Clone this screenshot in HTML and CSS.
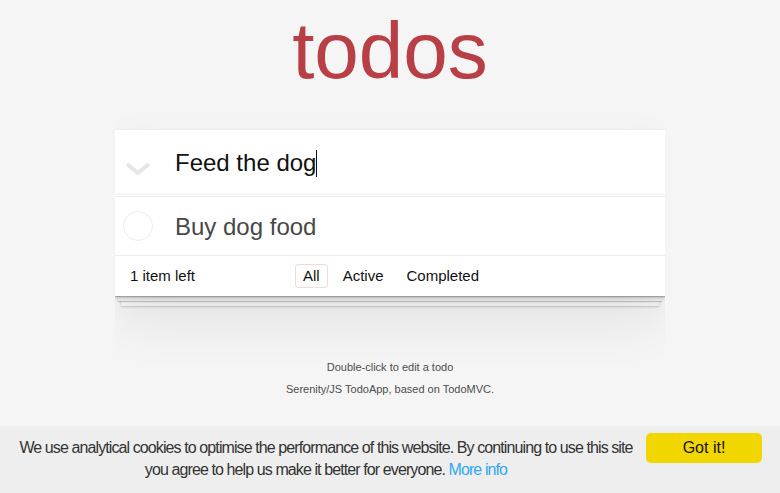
FILE: index.html
```html
<!DOCTYPE html>
<html lang="en">
<head>
  <meta charset="UTF-8">
  <title>Serenity/JS TodoApp</title>
  <link rel="stylesheet" href="styles.css">
</head>
<body>

  <section class="todoapp">
    <h1>todos</h1>

    <!-- New todo -->
    <header class="header">
      <div class="toggle-all">
        <svg width="26" height="14" viewBox="0 0 26 14">
          <polyline points="2,2 13,11 24,2" fill="none" stroke="#e6e6e6" stroke-width="4"/>
        </svg>
      </div>
      <div class="new-todo">Feed the dog<span class="caret"></span></div>
    </header>

    <!-- Todo list -->
    <ul class="todo-list">
      <li>
        <span class="toggle"></span>
        <label>Buy dog food</label>
      </li>
    </ul>

    <!-- Footer -->
    <footer class="footer">
      <span class="todo-count"><strong>1</strong> item left</span>
      <ul class="filters">
        <li><a class="selected" href="#/">All</a></li>
        <li><a href="#/active">Active</a></li>
        <li><a href="#/completed">Completed</a></li>
      </ul>
    </footer>
  </section>

  <footer class="info">
    <p>Double-click to edit a todo</p>
    <p>Serenity/JS TodoApp, based on TodoMVC.</p>
  </footer>

  <!-- Cookie banner -->
  <div class="cookie-bar">
    <span class="cookie-message">We use analytical cookies to optimise the performance of this website. By continuing to use this site you agree to help us make it better for everyone. <a href="#">More info</a></span>
    <a class="cookie-btn" href="#">Got it!</a>
  </div>

</body>
</html>
```
FILE: styles.css
```css
html,
body {
  margin: 0;
  padding: 0;
}

body {
  font: 14px 'Liberation Sans', Arial, sans-serif;
  line-height: 1.4em;
  background: #f5f5f5;
  color: #111111;
  max-width: 550px;
  margin: 0 auto;
}

.todoapp {
  background: #fff;
  margin: 130px 0 40px 0;
  position: relative;
  box-shadow: 0 2px 4px 0 rgba(0, 0, 0, 0.2),
              0 25px 50px 0 rgba(0, 0, 0, 0.08);
}

.todoapp h1 {
  position: absolute;
  top: -135px;
  width: 100%;
  margin: 0;
  font-size: 80px;
  font-weight: normal;
  line-height: 1.4em;
  text-align: center;
  color: #b83f45;
}

.header {
  display: flex;
  height: 65px;
  box-shadow: inset 0 -2px 1px rgba(0, 0, 0, 0.03);
}

.toggle-all {
  width: 60px;
  display: flex;
  align-items: center;
  justify-content: center;
  padding-top: 12px;
  box-sizing: border-box;
  padding-right: 14px;
}

.new-todo {
  flex: 1;
  font-size: 24px;
  line-height: 1.4em;
  padding: 16px 16px 16px 0;
  color: #111;
}

.caret {
  display: inline-block;
  width: 1px;
  height: 27px;
  background: #111;
  vertical-align: -6px;
}

.todo-list {
  margin: 0;
  padding: 0;
  list-style: none;
}

.todo-list li {
  display: flex;
  align-items: center;
  height: 58px;
  font-size: 24px;
  border-top: 1px solid #ededed;
  border-bottom: 1px solid #ededed;
  margin-top: 1px;
}

.toggle {
  width: 28px;
  height: 28px;
  margin: 0 22px 0 8px;
  border: 1px solid #ededed;
  border-radius: 50%;
}

.todo-list label {
  padding: 0 15px 0 0;
  line-height: 1.2;
  color: #484848;
  margin-top: 2px;
}

.footer {
  display: grid;
  grid-template-columns: 1fr auto 1fr;
  align-items: center;
  height: 40px;
  padding: 0 15px;
  font-size: 15px;
  color: #111;
  position: relative;
}

.footer::before {
  content: '';
  position: absolute;
  right: 0;
  bottom: 0;
  left: 0;
  height: 50px;
  overflow: hidden;
  z-index: -1;
  box-shadow: 0 1px 1px rgba(0, 0, 0, 0.2),
              0 8px 0 -3px #f6f6f6,
              0 9px 1px -3px rgba(0, 0, 0, 0.2),
              0 16px 0 -6px #f6f6f6,
              0 17px 2px -6px rgba(0, 0, 0, 0.2);
}

.todo-count strong {
  font-weight: normal;
}

.filters {
  display: flex;
  gap: 1px;
  margin: 0 0 0 2px;
  padding: 0;
  list-style: none;
}

.filters a {
  display: block;
  margin: 3px;
  padding: 3px 7px;
  line-height: 16px;
  color: inherit;
  text-decoration: none;
  border: 1px solid transparent;
  border-radius: 3px;
}

.filters a.selected {
  border-color: rgba(206, 70, 70, 0.2);
}

.info {
  margin: 66px auto 0;
  color: #4d4d4d;
  font-size: 11px;
  text-align: center;
}

.info p {
  line-height: 1;
  margin: 0 0 11px;
}

.cookie-bar {
  position: fixed;
  left: 0;
  right: 0;
  bottom: 0;
  display: flex;
  align-items: flex-start;
  padding: 7px 18px 12px 14px;
  background: #eeeeee;
  font-size: 16px;
  line-height: 22px;
  color: #333;
}

.cookie-message {
  flex: 1;
  text-align: center;
  padding-top: 4px;
  letter-spacing: -0.9px;
}

.cookie-message a {
  color: #31a8f0;
  text-decoration: none;
}

.cookie-btn {
  width: 116px;
  margin-left: 8px;
  padding: 4px 0;
  border-radius: 5px;
  background: #f1d600;
  color: #111;
  text-align: center;
  text-decoration: none;
}
```
